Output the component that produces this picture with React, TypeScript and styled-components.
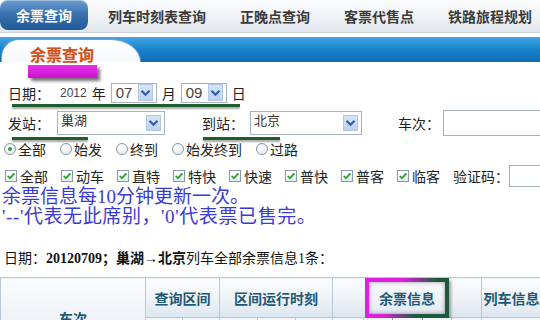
import React from "react";
import styled, { createGlobalStyle, css } from "styled-components";

const GlobalStyle = createGlobalStyle`
  html, body {
    margin: 0;
    padding: 0;
    background: #ffffff;
  }
  body {
    font-family: "Noto Sans CJK SC", "Liberation Sans", sans-serif;
    color: #222;
  }
`;

const Page = styled.div`
  width: 540px;
  height: 320px;
  overflow: hidden;
  background: #fff;
`;

const NavBar = styled.div`
  display: flex;
  align-items: flex-start;
  gap: 34px;
  height: 32px;
  background: linear-gradient(#fbfcfd, #eef2f6 60%, #e0e6ed);
  border-bottom: 1px solid #cbd3dc;
`;

const NavTab = styled.div<{ $active?: boolean }>`
  flex: none;
  height: 32px;
  display: flex;
  align-items: center;
  justify-content: center;
  font-size: 14px;
  font-weight: bold;
  line-height: 1;
  color: #3a3a3a;
  white-space: nowrap;
  ${(p) =>
    p.$active &&
    css`
      width: 88px;
      height: 30px;
      margin-right: -14px;
      color: #fff;
      border-radius: 8px;
      background: linear-gradient(#6d9dd1, #3b73b1 45%, #1f5997);
      box-shadow: inset 0 1px 0 rgba(255, 255, 255, 0.35);
    `}
`;

const BlueBar = styled.div`
  margin-top: 4px;
  height: 25px;
  box-sizing: border-box;
  padding: 2px 0 0 1px;
  background: linear-gradient(#47a6e4, #1b86cd 45%, #0f6bb2);
`;

const PanelTab = styled.div`
  width: 140px;
  height: 23px;
  box-sizing: border-box;
  padding: 4px 0 0 28px;
  border: 1px solid #5da5db;
  border-bottom: none;
  border-radius: 18px 30px 0 0 / 18px 23px 0 0;
  background: linear-gradient(#ffffff, #f6f8fb);
  font-size: 16px;
  font-weight: bold;
  line-height: 20px;
  color: #d4511c;
  text-shadow: 0 0 1px rgba(190, 80, 20, 0.3);
`;

const Marker = styled.div`
  margin: 3px 0 0 28px;
  width: 69px;
  height: 13px;
  background: linear-gradient(#ea30ea, #c814cc);
  box-shadow: 3px 3px 3px rgba(0, 0, 0, 0.55);
`;

const Label = styled.span`
  font-size: 14px;
  line-height: 20px;
  color: #222;
  white-space: nowrap;
`;

const DateRow = styled.div`
  display: flex;
  align-items: center;
  gap: 5px;
  height: 21px;
  margin-top: 4px;
  padding-left: 8px;
`;

const Year = styled.span`
  margin-left: 5px;
  font-family: "Liberation Sans", sans-serif;
  font-size: 12px;
  color: #444;
`;

const selectBase = css`
  box-sizing: border-box;
  display: flex;
  align-items: center;
  justify-content: space-between;
  background: #fff;
  border: 1px solid #a9b3be;
`;

const DateSelect = styled.div`
  ${selectBase}
  width: 46px;
  height: 20px;
  padding: 0 3px 0 4px;
  font-family: "Liberation Sans", sans-serif;
  font-size: 15px;
  color: #444;
`;

const StationSelect = styled.div<{ $w: number }>`
  ${selectBase}
  width: ${(p) => p.$w}px;
  height: 24px;
  padding: 0 3px 0 3px;
`;

const StationText = styled.span`
  align-self: flex-start;
  font-size: 13px;
  line-height: 16px;
  color: #333;
`;

const Arrow = styled.span<{ $h: number }>`
  box-sizing: border-box;
  width: 15px;
  height: ${(p) => p.$h}px;
  display: flex;
  align-items: center;
  justify-content: center;
  background: linear-gradient(#d6e4f7, #bdd2ef);
  border: 1px solid #b4c8e6;
`;

const Chevron = () => (
  <svg width="11" height="8" viewBox="0 0 11 8">
    <path d="M1.5 1.8 L5.5 5.8 L9.5 1.8" fill="none" stroke="#2e5ea8" strokeWidth="2.2" />
  </svg>
);

const Underline = styled.div<{ $w: number }>`
  width: ${(p) => p.$w}px;
  height: 3px;
  background: #1e5e2c;
  box-shadow: 0 2px 2px rgba(0, 0, 0, 0.35);
`;

const DateUnderline = styled(Underline)`
  margin: 1px 0 0 12px;
`;

const UnderlineRow = styled.div`
  display: flex;
  gap: 115px;
  margin-top: 1px;
  padding-left: 12px;
`;

const StationRow = styled.div`
  display: grid;
  grid-template-columns: 49px 108px 37px 48px 112px 36px 45px 120px;
  align-items: center;
  height: 26px;
  margin-top: 3px;
  padding-left: 8px;
`;

const TextBox = styled.input<{ $w: number; $h: number }>`
  box-sizing: border-box;
  width: ${(p) => p.$w}px;
  height: ${(p) => p.$h}px;
  margin: 0;
  border: 1px solid #a9b1bb;
  background: #fff;
  outline: none;
`;

const RadioRow = styled.div`
  display: flex;
  align-items: center;
  gap: 14px;
  height: 16px;
  margin-top: 1px;
  padding-left: 4px;
`;

const Option = styled.label`
  display: flex;
  align-items: center;
  gap: 2px;
  font-size: 14px;
  line-height: 16px;
  color: #222;
  white-space: nowrap;
`;

const Radio = styled.span<{ $on?: boolean }>`
  position: relative;
  box-sizing: border-box;
  width: 12px;
  height: 12px;
  border-radius: 50%;
  border: 1px solid #8a98a8;
  background: radial-gradient(circle at 40% 35%, #ffffff, #dfe5eb);
  ${(p) =>
    p.$on &&
    css`
      &::after {
        content: "";
        position: absolute;
        left: 3px;
        top: 3px;
        width: 4px;
        height: 4px;
        border-radius: 50%;
        background: #35a035;
      }
    `}
`;

const CheckRow = styled.div`
  display: flex;
  align-items: center;
  gap: 13px;
  height: 22px;
  margin-top: 8px;
  padding-left: 5px;
`;

const Box = styled.span`
  box-sizing: border-box;
  width: 12px;
  height: 12px;
  margin-right: 1px;
  display: flex;
  align-items: center;
  justify-content: center;
  border: 1px solid #8c9aab;
  background: linear-gradient(#ffffff, #e3e8ee);
`;

const Tick = () => (
  <svg width="10" height="10" viewBox="0 0 10 10">
    <path d="M1.8 5 L4 7.3 L8.4 2.4" fill="none" stroke="#2f9a2f" strokeWidth="1.8" />
  </svg>
);

const Captcha = styled.div`
  display: flex;
  align-items: center;
`;

const Notice = styled.div`
  padding-left: 2px;
  font-family: "Liberation Serif", "Noto Sans CJK SC", serif;
  font-size: 19px;
  line-height: 20px;
  color: #3b3bd2;
  white-space: nowrap;
`;

const SoldOut = styled.span`
  letter-spacing: 0.6px;
`;

const Summary = styled.div`
  margin-top: 22px;
  padding-left: 4px;
  font-family: "Liberation Serif", "Noto Sans CJK SC", serif;
  font-size: 14px;
  line-height: 20px;
  color: #111;
  white-space: nowrap;
  b {
    font-weight: bold;
  }
`;

const Grid = styled.table`
  margin-top: 8px;
  width: 541px;
  border-collapse: collapse;
  table-layout: fixed;
`;

const Col = styled.col<{ $w: number }>`
  width: ${(p) => p.$w}px;
`;

const HeadCell = styled.th`
  position: relative;
  height: 39px;
  padding: 0;
  border: 1px solid #b8c8d7;
  background: linear-gradient(#fbfcfd, #edf2f7 55%, #dce5ee);
  font-size: 14px;
  font-weight: bold;
  color: #1d5877;
  white-space: nowrap;
`;

const SubCell = styled(HeadCell)`
  background: linear-gradient(#f4f7fa, #e6edf4);
`;

const Spotlight = styled.div`
  position: absolute;
  left: 32px;
  top: 0;
  width: 84px;
  height: 40px;
  box-sizing: border-box;
  border: 4px solid;
  border-image: linear-gradient(120deg, #e21ee2 35%, #1d5a3c 70%) 1;
  box-shadow: 2px 2px 3px rgba(0, 0, 0, 0.35), inset 0 0 4px rgba(0, 0, 0, 0.4);
  pointer-events: none;
`;

const navItems = ["余票查询", "列车时刻表查询", "正晚点查询", "客票代售点", "铁路旅程规划"];
const radios = ["全部", "始发", "终到", "始发终到", "过路"];
const trainTypes = ["全部", "动车", "直特", "特快", "快速", "普快", "普客", "临客"];
const colWidths = [145, 37, 37, 38, 38, 37, 31, 29, 30, 29, 30, 60];

export default function App() {
  return (
    <>
      <GlobalStyle />
      <Page>
        <NavBar>
          {navItems.map((n, i) => (
            <NavTab key={n} $active={i === 0}>
              {n}
            </NavTab>
          ))}
        </NavBar>

        <BlueBar>
          <PanelTab>余票查询</PanelTab>
        </BlueBar>
        <Marker />

        <DateRow>
          <Label>日期：</Label>
          <Year>2012</Year>
          <Label>年</Label>
          <DateSelect>
            07
            <Arrow $h={17}>
              <Chevron />
            </Arrow>
          </DateSelect>
          <Label>月</Label>
          <DateSelect>
            09
            <Arrow $h={17}>
              <Chevron />
            </Arrow>
          </DateSelect>
          <Label>日</Label>
        </DateRow>
        <DateUnderline $w={228} />

        <StationRow>
          <Label>发站：</Label>
          <StationSelect $w={108}>
            <StationText>巢湖</StationText>
            <Arrow $h={16}>
              <Chevron />
            </Arrow>
          </StationSelect>
          <span />
          <Label>到站：</Label>
          <StationSelect $w={112}>
            <StationText>北京</StationText>
            <Arrow $h={16}>
              <Chevron />
            </Arrow>
          </StationSelect>
          <span />
          <Label>车次：</Label>
          <TextBox $w={120} $h={26} readOnly />
        </StationRow>
        <UnderlineRow>
          <Underline $w={76} />
          <Underline $w={77} />
        </UnderlineRow>

        <RadioRow>
          {radios.map((r, i) => (
            <Option key={r}>
              <Radio $on={i === 0} />
              {r}
            </Option>
          ))}
        </RadioRow>

        <CheckRow>
          {trainTypes.map((t) => (
            <Option key={t}>
              <Box>
                <Tick />
              </Box>
              {t}
            </Option>
          ))}
          <Captcha>
            <Label>验证码：</Label>
            <TextBox $w={60} $h={22} readOnly />
          </Captcha>
        </CheckRow>

        <Notice>
          余票信息每10分钟更新一次。
          <br />
          <SoldOut>'--'代表无此席别，'0'代表票已售完。</SoldOut>
        </Notice>

        <Summary>
          日期：<b>20120709；巢湖→北京</b>列车全部余票信息1条：
        </Summary>

        <Grid>
          <colgroup>
            {colWidths.map((w, i) => (
              <Col key={i} $w={w} />
            ))}
          </colgroup>
          <thead>
            <tr>
              <HeadCell rowSpan={2}>车次</HeadCell>
              <HeadCell colSpan={2}>查询区间</HeadCell>
              <HeadCell colSpan={3}>区间运行时刻</HeadCell>
              <HeadCell colSpan={5}>
                余票信息
                <Spotlight />
              </HeadCell>
              <HeadCell>列车信息</HeadCell>
            </tr>
            <tr>
              {colWidths.slice(1).map((_, i) => (
                <SubCell key={i} />
              ))}
            </tr>
          </thead>
        </Grid>
      </Page>
    </>
  );
}
